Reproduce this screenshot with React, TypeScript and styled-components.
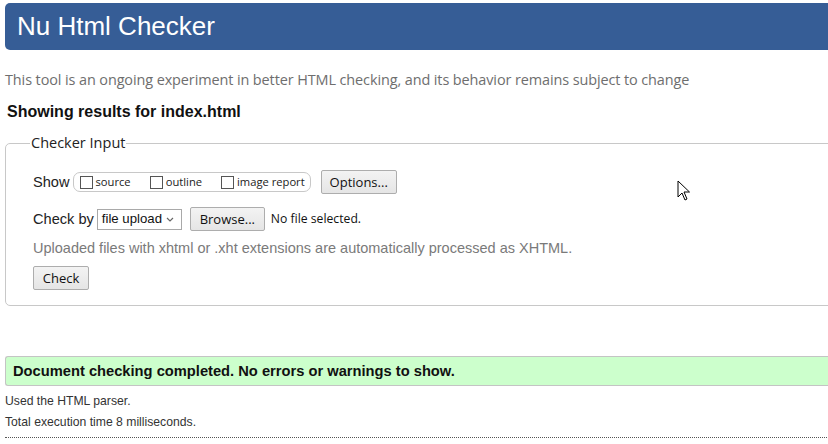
import React from "react";
import styled, { createGlobalStyle } from "styled-components";

const Global = createGlobalStyle`
  html, body { margin: 0; padding: 0; background: #fff; overflow: hidden; }
  body { font-family: "Liberation Sans", Arial, sans-serif; color: #222; }
`;

const Page = styled.div`
  width: 880px;
  padding: 3px 0 0 5px;
  position: relative;
`;

const Header = styled.h1`
  margin: 0;
  height: 47px;
  background: #365d96;
  border-radius: 5px 0 0 5px;
  color: #fff;
  font: 400 26px/47px "Liberation Sans", Arial, sans-serif;
  padding-left: 12px;
`;

const Intro = styled.p`
  margin: 20px 0 0 0;
  color: #6e6e6e;
  font: 400 14.45px/20px "Open Sans", sans-serif;
  letter-spacing: -0.1px;
`;

const Results = styled.h2`
  margin: 12px 0 0 2px;
  font: 700 16px/20px "Liberation Sans", Arial, sans-serif;
  color: #111;
`;

const Fieldset = styled.fieldset`
  margin: 11px 0 0 0;
  border: 1px solid #c8c8c8;
  border-radius: 5px;
  padding: 12px 27px 15px 27px;
`;

const Legend = styled.legend`
  padding: 0 1px;
  margin-left: -3px;
  font: 400 14.5px/20px "Open Sans", sans-serif;
  color: #222;
`;

const Row = styled.div<{ $mt?: number }>`
  display: flex;
  align-items: center;
  margin-top: ${(p) => p.$mt ?? 0}px;
  font: 400 14.6px/20px "Liberation Sans", Arial, sans-serif;
  color: #222;
`;

const Label = styled.span`
  margin-right: 3px;
`;

const Pill = styled.div`
  display: flex;
  align-items: center;
  height: 18px;
  border: 1px solid #c8c8c8;
  border-radius: 7px;
  padding: 0 5px 0 6px;
  gap: 19px;
`;

const CheckItem = styled.label`
  display: flex;
  align-items: center;
  font: 400 11.2px/14px "Open Sans", sans-serif;
  color: #222;
`;

const Box = styled.span`
  width: 11px;
  height: 11px;
  border: 1px solid #555;
  margin-right: 3px;
  background: #fff;
`;

const Button = styled.button<{ $ml?: number; $w: number }>`
  margin-left: ${(p) => p.$ml ?? 0}px;
  width: ${(p) => p.$w}px;
  height: 24px;
  border: 1px solid #adadad;
  background: linear-gradient(#f3f3f3, #e5e5e5);
  border-radius: 2px;
  font: 400 13px/20px "Open Sans", sans-serif;
  color: #111;
  padding: 0;
`;

const Select = styled.div`
  display: flex;
  align-items: center;
  justify-content: space-between;
  width: 85px;
  height: 21px;
  border: 1px solid #a9a9a9;
  padding: 0 7px 0 4px;
  box-sizing: border-box;
  font: 400 13.2px/18px "Liberation Sans", Arial, sans-serif;
  color: #111;
`;

const Muted = styled.p`
  margin: 7px 0 0 0;
  font: 400 14.5px/20px "Liberation Sans", Arial, sans-serif;
  color: #7a7a7a;
`;

const NoFile = styled.span`
  margin-left: 6px;
  font: 400 12.2px/20px "Open Sans", sans-serif;
  color: #111;
`;

const Success = styled.div`
  margin-top: 50px;
  height: 28px;
  background: #ccffcc;
  border: 1px solid #c4c4c4;
  border-right: none;
  border-radius: 3px 0 0 3px;
  font: 700 14.7px/28px "Liberation Sans", Arial, sans-serif;
  color: #111;
  padding-left: 7px;
`;

const Info = styled.p<{ $mt: number }>`
  margin: ${(p) => p.$mt}px 0 0 0;
  font: 400 12.2px/16px "Liberation Sans", Arial, sans-serif;
  color: #333;
`;

const Rule = styled.hr`
  margin: 7px 0 0 0;
  border: none;
  border-top: 1px dotted #555;
`;

const Cursor = styled.svg`
  position: absolute;
  left: 677px;
  top: 180px;
`;

export default function App() {
  return (
    <>
      <Global />
      <Page>
        <Header>Nu Html Checker</Header>
        <Intro>
          This tool is an ongoing experiment in better HTML checking, and its behavior remains subject to change
        </Intro>
        <Results>Showing results for index.html</Results>
        <Fieldset>
          <Legend>Checker Input</Legend>
          <Row $mt={5}>
            <Label>Show</Label>
            <Pill>
              <CheckItem>
                <Box />
                source
              </CheckItem>
              <CheckItem>
                <Box />
                outline
              </CheckItem>
              <CheckItem>
                <Box />
                image report
              </CheckItem>
            </Pill>
            <Button $ml={10} $w={76}>Options...</Button>
          </Row>
          <Row $mt={13}>
            <Label>Check by</Label>
            <Select>
              <span>file upload</span>
              <svg width="8" height="5" viewBox="0 0 8 5">
                <path d="M1 1 L4 4 L7 1" fill="none" stroke="#666" strokeWidth="1.2" />
              </svg>
            </Select>
            <Button $ml={8} $w={75}>Browse...</Button>
            <NoFile>No file selected.</NoFile>
          </Row>
          <Muted>Uploaded files with xhtml or .xht extensions are automatically processed as XHTML.</Muted>
          <Row $mt={8}>
            <Button $w={56}>Check</Button>
          </Row>
        </Fieldset>
        <Success>Document checking completed. No errors or warnings to show.</Success>
        <Info $mt={7}>Used the HTML parser.</Info>
        <Info $mt={5}>Total execution time 8 milliseconds.</Info>
        <Rule />
        <Cursor width="14" height="22" viewBox="0 0 14 22">
          <path d="M1 1 L1 17 L5 13 L8 20 L10 19 L7 12 L12.5 12 Z" fill="#fff" stroke="#000" strokeWidth="1" strokeLinejoin="round" />
        </Cursor>
      </Page>
    </>
  );
}
